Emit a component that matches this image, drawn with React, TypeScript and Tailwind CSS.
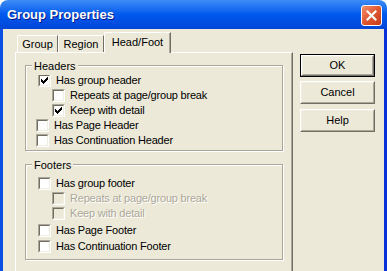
const Check = () => (
  <svg width="7" height="7" viewBox="0 0 7 7" shapeRendering="crispEdges">
    <rect x="0" y="2" width="1" height="3" fill="#000" />
    <rect x="1" y="3" width="1" height="3" fill="#000" />
    <rect x="2" y="4" width="1" height="3" fill="#000" />
    <rect x="3" y="3" width="1" height="3" fill="#000" />
    <rect x="4" y="2" width="1" height="3" fill="#000" />
    <rect x="5" y="1" width="1" height="3" fill="#000" />
    <rect x="6" y="0" width="1" height="3" fill="#000" />
  </svg>
);

type RowProps = {
  label: string;
  checked?: boolean;
  disabled?: boolean;
  className?: string;
};

const Row = ({ label, checked, disabled, className = "" }: RowProps) => (
  <div className={`flex items-center h-[15px] gap-[5px] ${className}`}>
    <span className="flex w-[13px] h-[13px] shrink-0 border border-t-[#ACA899] border-l-[#ACA899] border-r-white border-b-white">
      <span
        className={`flex flex-1 items-center justify-center border border-t-[#716F64] border-l-[#716F64] border-r-[#F1EFE2] border-b-[#F1EFE2] ${
          disabled ? "bg-[#ECE9D8]" : "bg-white"
        }`}
      >
        {checked && <Check />}
      </span>
    </span>
    <span
      className={
        disabled
          ? "text-[#ACA899] [text-shadow:1px_1px_0_#fff] whitespace-nowrap tracking-[-0.2px]"
          : "whitespace-nowrap tracking-[-0.2px]"
      }
    >
      {label}
    </span>
  </div>
);

const Button = ({ label, primary, className = "" }: { label: string; primary?: boolean; className?: string }) => (
  <div
    className={`h-[23px] w-[75px] flex ${primary ? "border border-black" : ""} ${className}`}
  >
    <div className="flex flex-1 border border-t-white border-l-white border-r-[#716F64] border-b-[#716F64]">
      <div className="flex flex-1 items-center justify-center border border-t-[#F1EFE2] border-l-[#F1EFE2] border-r-[#ACA899] border-b-[#ACA899] bg-[#ECE9D8]">
        {label}
      </div>
    </div>
  </div>
);

export default function App() {
  return (
    <div className="w-[387px] h-[271px] overflow-hidden bg-white flex flex-col font-['Liberation_Sans',Arial,sans-serif] text-[11px] text-black">
      {/* title bar */}
      <div className="h-[29px] shrink-0 rounded-t-[8px] bg-gradient-to-b from-[#3C8CF6] via-[#0058EE] to-[#0046D8] flex items-center pl-[7px] pr-[5px]">
        <span className="text-white font-bold text-[13px] [text-shadow:1px_1px_0_#0A1A8A]">
          Group Properties
        </span>
        <div className="ml-auto mt-[2px] w-[21px] h-[21px] rounded-[3px] border border-white bg-gradient-to-br from-[#F0906C] via-[#E0572F] to-[#C33A1A] flex items-center justify-center">
          <svg width="11" height="11" viewBox="0 0 11 11">
            <path d="M1.5 1.5 L9.5 9.5 M9.5 1.5 L1.5 9.5" stroke="#fff" strokeWidth="2.2" strokeLinecap="square" />
          </svg>
        </div>
      </div>

      <div className="flex flex-1">
        <div className="w-[3px] bg-[#0A4EE4]" />
        <div className="flex flex-1 bg-[#ECE9D8] pl-[12px] pt-[3px]">
          {/* tabs + panel */}
          <div className="flex flex-col w-[278px]">
            <div className="flex items-end h-[20px] pl-[2px]">
              <div className="h-[17px] w-[41px] flex items-center justify-center rounded-tl-[2px] border-l border-t border-white border-r border-r-[#716F64]">
                Group
              </div>
              <div className="h-[17px] w-[46px] flex items-center justify-center rounded-tl-[2px] border-l border-t border-white border-r border-r-[#716F64]">
                Region
              </div>
              <div className="relative z-10 -mb-[1px] h-[21px] w-[67px] flex items-center justify-center pb-[2px] rounded-tl-[2px] bg-[#ECE9D8] border-l border-t border-white border-r border-r-[#716F64] shadow-[inset_-1px_0_0_#ACA899]">
                Head/Foot
              </div>
            </div>
            <div className="flex-1 border-l border-t border-white border-r border-r-[#716F64] shadow-[inset_-1px_0_0_#ACA899] pl-[9px] pr-[9px] pt-[12px]">
              {/* Headers */}
              <div className="relative border border-[#ACA899] shadow-[1px_1px_0_#fff,inset_1px_1px_0_#fff] pl-[12px] pt-[7px] pb-[2px]">
                <span className="absolute -top-[8px] left-[6px] px-[2px] bg-[#ECE9D8]">Headers</span>
                <Row label="Has group header" checked />
                <Row label="Repeats at page/group break" className="ml-[14px]" />
                <Row label="Keep with detail" checked className="ml-[14px]" />
                <Row label="Has Page Header" className="-ml-[2px]" />
                <Row label="Has Continuation Header" className="-ml-[2px]" />
              </div>
              {/* Footers */}
              <div className="relative mt-[13px] border border-[#ACA899] shadow-[1px_1px_0_#fff,inset_1px_1px_0_#fff] pl-[12px] pt-[11px] pb-[5px]">
                <span className="absolute -top-[8px] left-[6px] px-[2px] bg-[#ECE9D8]">Footers</span>
                <Row label="Has group footer" />
                <Row label="Repeats at page/group break" disabled className="ml-[14px]" />
                <Row label="Keep with detail" disabled className="ml-[14px]" />
                <Row label="Has Page Footer" className="mt-[2px]" />
                <Row label="Has Continuation Footer" className="mt-[1px]" />
              </div>
            </div>
          </div>
          {/* buttons */}
          <div className="flex flex-col ml-[7px] pt-[22px]">
            <Button label="OK" primary />
            <Button label="Cancel" className="mt-[4px]" />
            <Button label="Help" className="mt-[5px]" />
          </div>
        </div>
        <div className="w-[3px] bg-[#0831D9]" />
      </div>
    </div>
  );
}
